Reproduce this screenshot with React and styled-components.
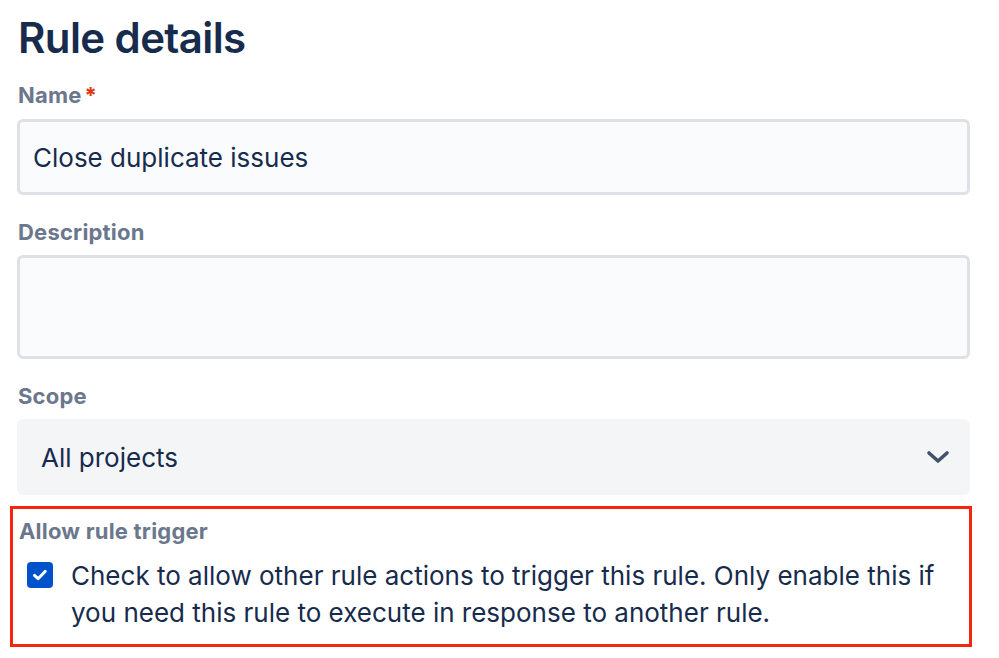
import React from 'react';
import styled, { createGlobalStyle } from 'styled-components';

const GlobalStyle = createGlobalStyle`
    body {
        margin: 0;
        background: #ffffff;
        font-family: Inter, "Noto Sans", sans-serif;
        color: #172B4D;
    }
`
const Page = styled.div`
    width: 999px;
    height: 658px;
    box-sizing: border-box;
    padding: 12px 29px 0 17px;
    display: flex;
    flex-direction: column;
`
const Title = styled.h1`
    margin: 0 0 18px 1px;
    font-size: 42px;
    line-height: 52px;
    font-weight: 600;
    letter-spacing: -0.6px;
    color: #172B4D;
`
const Label = styled.label`
    display: block;
    margin: 0 0 ${p => p.$gap || 10}px 1px;
    font-size: 22px;
    line-height: 26px;
    font-weight: 700;
    letter-spacing: 0.2px;
    color: #6B778C;
`
const Required = styled.span`
    color: #DE350B;
    margin-left: 3px;
`
const TextField = styled.div`
    box-sizing: border-box;
    height: ${p => p.$height}px;
    margin-bottom: 24px;
    padding: 0 13px;
    display: flex;
    align-items: center;
    background: #FAFBFC;
    border: 3px solid #DFE1E6;
    border-radius: 6px;
    font-size: 26px;
    color: #172B4D;
`
const Select = styled.div`
    box-sizing: border-box;
    height: 76px;
    padding: 0 20px 0 24px;
    display: flex;
    align-items: center;
    justify-content: space-between;
    background: #F4F5F7;
    border-radius: 6px;
    font-size: 26px;
    color: #172B4D;
`
const Highlight = styled.section`
    margin: 11px -2px 0 -7px;
    padding: 9px 0 13px 5px;
    border: 3px solid #F5260F;
`
const CheckRow = styled.div`
    display: flex;
    align-items: flex-start;
    gap: 18px;
    padding-left: 9px;
`
const Box = styled.span`
    flex: none;
    width: 26px;
    height: 26px;
    margin-top: 5px;
    border-radius: 4px;
    background: #0052CC;
    display: flex;
    align-items: center;
    justify-content: center;
`
const CheckText = styled.p`
    margin: 0;
    max-width: 885px;
    font-size: 26px;
    line-height: 37px;
    color: #172B4D;
`

function App() {
    return (
        <Page>
            <GlobalStyle />
            <Title>Rule details</Title>

            <Label $gap={11}>Name<Required>*</Required></Label>
            <TextField $height={76}>Close duplicate issues</TextField>

            <Label>Description</Label>
            <TextField $height={104} />

            <Label>Scope</Label>
            <Select>
                All projects
                <svg width="24" height="14" viewBox="0 0 24 14">
                    <path d="M3 3l9 8 9-8" fill="none" stroke="#42526E" strokeWidth="3.6" strokeLinecap="round" strokeLinejoin="round" />
                </svg>
            </Select>

            <Highlight>
                <Label $gap={13}>Allow rule trigger</Label>
                <CheckRow>
                    <Box>
                        <svg width="18" height="18" viewBox="0 0 18 18">
                            <path d="M3.5 9.3l3.6 3.4 7.2-7.4" fill="none" stroke="#ffffff" strokeWidth="3" strokeLinecap="round" strokeLinejoin="round" />
                        </svg>
                    </Box>
                    <CheckText>
                        Check to allow other rule actions to trigger this rule. Only enable this if
                        you need this rule to execute in response to another rule.
                    </CheckText>
                </CheckRow>
            </Highlight>
        </Page>
    )
}

export default App;
